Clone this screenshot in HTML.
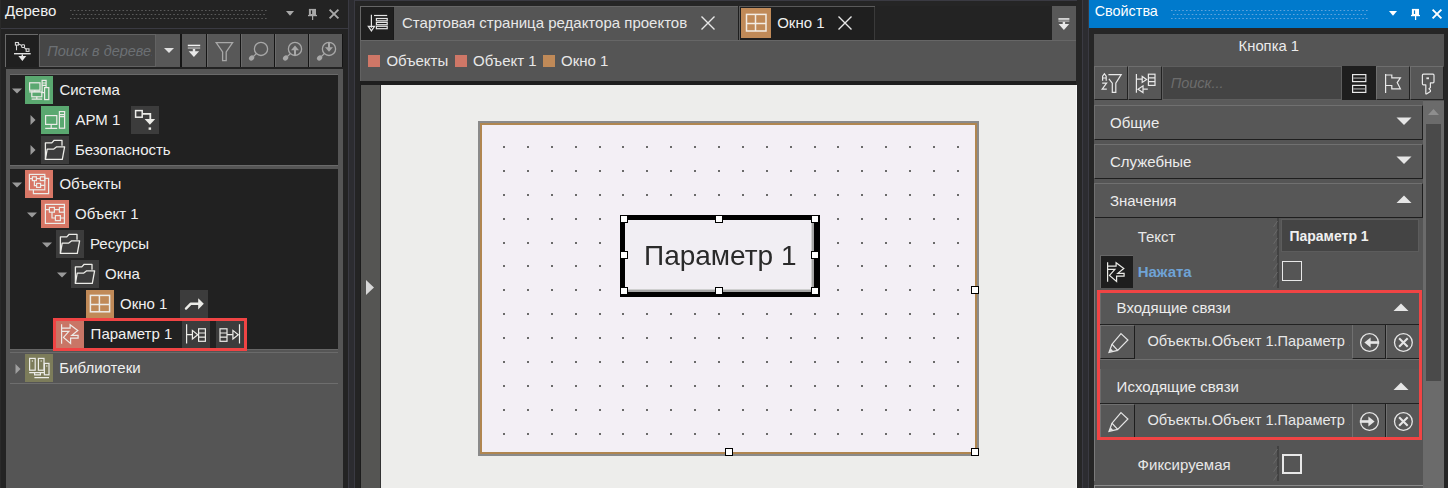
<!DOCTYPE html>
<html><head><meta charset="utf-8"><style>
html,body{margin:0;padding:0;}
body{width:1448px;height:488px;overflow:hidden;position:relative;background:#262626;font-family:"Liberation Sans",sans-serif;}
.a{position:absolute;}
.t{white-space:nowrap;}
svg.a{overflow:visible;}
</style></head><body>
<div class="a" style="left:0px;top:0px;width:1448px;height:488px;background:#262626;"></div>
<div class="a" style="left:0px;top:0px;width:348px;height:488px;background:#232323;"></div>
<div class="a" style="left:0px;top:28px;width:348px;height:1px;background:#3a3a42;"></div>
<div class="a" style="left:348px;top:0px;width:1px;height:488px;background:#3a3a42;"></div>
<div class="a" style="left:349px;top:0px;width:5px;height:488px;background:#2c2c30;"></div>
<div class="a" style="left:354px;top:0px;width:1px;height:488px;background:#3a3a42;"></div>
<div class="a" style="left:355px;top:0px;width:5px;height:488px;background:#242424;"></div>
<div class="a t" style="left:5px;top:3.30px;font-size:15px;line-height:15px;color:#f2f2f2;font-weight:normal;font-style:normal;">Дерево</div>
<svg class="a" style="left:70px;top:8px;" width="196" height="14" viewBox="0 0 196 14"><rect x="0.00" y="2" width="1.6" height="1" fill="#5a5a5a"/><rect x="3.75" y="2" width="1.6" height="1" fill="#5a5a5a"/><rect x="7.50" y="2" width="1.6" height="1" fill="#5a5a5a"/><rect x="11.25" y="2" width="1.6" height="1" fill="#5a5a5a"/><rect x="15.00" y="2" width="1.6" height="1" fill="#5a5a5a"/><rect x="18.75" y="2" width="1.6" height="1" fill="#5a5a5a"/><rect x="22.50" y="2" width="1.6" height="1" fill="#5a5a5a"/><rect x="26.25" y="2" width="1.6" height="1" fill="#5a5a5a"/><rect x="30.00" y="2" width="1.6" height="1" fill="#5a5a5a"/><rect x="33.75" y="2" width="1.6" height="1" fill="#5a5a5a"/><rect x="37.50" y="2" width="1.6" height="1" fill="#5a5a5a"/><rect x="41.25" y="2" width="1.6" height="1" fill="#5a5a5a"/><rect x="45.00" y="2" width="1.6" height="1" fill="#5a5a5a"/><rect x="48.75" y="2" width="1.6" height="1" fill="#5a5a5a"/><rect x="52.50" y="2" width="1.6" height="1" fill="#5a5a5a"/><rect x="56.25" y="2" width="1.6" height="1" fill="#5a5a5a"/><rect x="60.00" y="2" width="1.6" height="1" fill="#5a5a5a"/><rect x="63.75" y="2" width="1.6" height="1" fill="#5a5a5a"/><rect x="67.50" y="2" width="1.6" height="1" fill="#5a5a5a"/><rect x="71.25" y="2" width="1.6" height="1" fill="#5a5a5a"/><rect x="75.00" y="2" width="1.6" height="1" fill="#5a5a5a"/><rect x="78.75" y="2" width="1.6" height="1" fill="#5a5a5a"/><rect x="82.50" y="2" width="1.6" height="1" fill="#5a5a5a"/><rect x="86.25" y="2" width="1.6" height="1" fill="#5a5a5a"/><rect x="90.00" y="2" width="1.6" height="1" fill="#5a5a5a"/><rect x="93.75" y="2" width="1.6" height="1" fill="#5a5a5a"/><rect x="97.50" y="2" width="1.6" height="1" fill="#5a5a5a"/><rect x="101.25" y="2" width="1.6" height="1" fill="#5a5a5a"/><rect x="105.00" y="2" width="1.6" height="1" fill="#5a5a5a"/><rect x="108.75" y="2" width="1.6" height="1" fill="#5a5a5a"/><rect x="112.50" y="2" width="1.6" height="1" fill="#5a5a5a"/><rect x="116.25" y="2" width="1.6" height="1" fill="#5a5a5a"/><rect x="120.00" y="2" width="1.6" height="1" fill="#5a5a5a"/><rect x="123.75" y="2" width="1.6" height="1" fill="#5a5a5a"/><rect x="127.50" y="2" width="1.6" height="1" fill="#5a5a5a"/><rect x="131.25" y="2" width="1.6" height="1" fill="#5a5a5a"/><rect x="135.00" y="2" width="1.6" height="1" fill="#5a5a5a"/><rect x="138.75" y="2" width="1.6" height="1" fill="#5a5a5a"/><rect x="142.50" y="2" width="1.6" height="1" fill="#5a5a5a"/><rect x="146.25" y="2" width="1.6" height="1" fill="#5a5a5a"/><rect x="150.00" y="2" width="1.6" height="1" fill="#5a5a5a"/><rect x="153.75" y="2" width="1.6" height="1" fill="#5a5a5a"/><rect x="157.50" y="2" width="1.6" height="1" fill="#5a5a5a"/><rect x="161.25" y="2" width="1.6" height="1" fill="#5a5a5a"/><rect x="165.00" y="2" width="1.6" height="1" fill="#5a5a5a"/><rect x="168.75" y="2" width="1.6" height="1" fill="#5a5a5a"/><rect x="172.50" y="2" width="1.6" height="1" fill="#5a5a5a"/><rect x="176.25" y="2" width="1.6" height="1" fill="#5a5a5a"/><rect x="180.00" y="2" width="1.6" height="1" fill="#5a5a5a"/><rect x="183.75" y="2" width="1.6" height="1" fill="#5a5a5a"/><rect x="187.50" y="2" width="1.6" height="1" fill="#5a5a5a"/><rect x="191.25" y="2" width="1.6" height="1" fill="#5a5a5a"/><rect x="195.00" y="2" width="1.6" height="1" fill="#5a5a5a"/><rect x="2.00" y="6" width="1.6" height="1" fill="#5a5a5a"/><rect x="5.75" y="6" width="1.6" height="1" fill="#5a5a5a"/><rect x="9.50" y="6" width="1.6" height="1" fill="#5a5a5a"/><rect x="13.25" y="6" width="1.6" height="1" fill="#5a5a5a"/><rect x="17.00" y="6" width="1.6" height="1" fill="#5a5a5a"/><rect x="20.75" y="6" width="1.6" height="1" fill="#5a5a5a"/><rect x="24.50" y="6" width="1.6" height="1" fill="#5a5a5a"/><rect x="28.25" y="6" width="1.6" height="1" fill="#5a5a5a"/><rect x="32.00" y="6" width="1.6" height="1" fill="#5a5a5a"/><rect x="35.75" y="6" width="1.6" height="1" fill="#5a5a5a"/><rect x="39.50" y="6" width="1.6" height="1" fill="#5a5a5a"/><rect x="43.25" y="6" width="1.6" height="1" fill="#5a5a5a"/><rect x="47.00" y="6" width="1.6" height="1" fill="#5a5a5a"/><rect x="50.75" y="6" width="1.6" height="1" fill="#5a5a5a"/><rect x="54.50" y="6" width="1.6" height="1" fill="#5a5a5a"/><rect x="58.25" y="6" width="1.6" height="1" fill="#5a5a5a"/><rect x="62.00" y="6" width="1.6" height="1" fill="#5a5a5a"/><rect x="65.75" y="6" width="1.6" height="1" fill="#5a5a5a"/><rect x="69.50" y="6" width="1.6" height="1" fill="#5a5a5a"/><rect x="73.25" y="6" width="1.6" height="1" fill="#5a5a5a"/><rect x="77.00" y="6" width="1.6" height="1" fill="#5a5a5a"/><rect x="80.75" y="6" width="1.6" height="1" fill="#5a5a5a"/><rect x="84.50" y="6" width="1.6" height="1" fill="#5a5a5a"/><rect x="88.25" y="6" width="1.6" height="1" fill="#5a5a5a"/><rect x="92.00" y="6" width="1.6" height="1" fill="#5a5a5a"/><rect x="95.75" y="6" width="1.6" height="1" fill="#5a5a5a"/><rect x="99.50" y="6" width="1.6" height="1" fill="#5a5a5a"/><rect x="103.25" y="6" width="1.6" height="1" fill="#5a5a5a"/><rect x="107.00" y="6" width="1.6" height="1" fill="#5a5a5a"/><rect x="110.75" y="6" width="1.6" height="1" fill="#5a5a5a"/><rect x="114.50" y="6" width="1.6" height="1" fill="#5a5a5a"/><rect x="118.25" y="6" width="1.6" height="1" fill="#5a5a5a"/><rect x="122.00" y="6" width="1.6" height="1" fill="#5a5a5a"/><rect x="125.75" y="6" width="1.6" height="1" fill="#5a5a5a"/><rect x="129.50" y="6" width="1.6" height="1" fill="#5a5a5a"/><rect x="133.25" y="6" width="1.6" height="1" fill="#5a5a5a"/><rect x="137.00" y="6" width="1.6" height="1" fill="#5a5a5a"/><rect x="140.75" y="6" width="1.6" height="1" fill="#5a5a5a"/><rect x="144.50" y="6" width="1.6" height="1" fill="#5a5a5a"/><rect x="148.25" y="6" width="1.6" height="1" fill="#5a5a5a"/><rect x="152.00" y="6" width="1.6" height="1" fill="#5a5a5a"/><rect x="155.75" y="6" width="1.6" height="1" fill="#5a5a5a"/><rect x="159.50" y="6" width="1.6" height="1" fill="#5a5a5a"/><rect x="163.25" y="6" width="1.6" height="1" fill="#5a5a5a"/><rect x="167.00" y="6" width="1.6" height="1" fill="#5a5a5a"/><rect x="170.75" y="6" width="1.6" height="1" fill="#5a5a5a"/><rect x="174.50" y="6" width="1.6" height="1" fill="#5a5a5a"/><rect x="178.25" y="6" width="1.6" height="1" fill="#5a5a5a"/><rect x="182.00" y="6" width="1.6" height="1" fill="#5a5a5a"/><rect x="185.75" y="6" width="1.6" height="1" fill="#5a5a5a"/><rect x="189.50" y="6" width="1.6" height="1" fill="#5a5a5a"/><rect x="193.25" y="6" width="1.6" height="1" fill="#5a5a5a"/><rect x="0.00" y="10" width="1.6" height="1" fill="#5a5a5a"/><rect x="3.75" y="10" width="1.6" height="1" fill="#5a5a5a"/><rect x="7.50" y="10" width="1.6" height="1" fill="#5a5a5a"/><rect x="11.25" y="10" width="1.6" height="1" fill="#5a5a5a"/><rect x="15.00" y="10" width="1.6" height="1" fill="#5a5a5a"/><rect x="18.75" y="10" width="1.6" height="1" fill="#5a5a5a"/><rect x="22.50" y="10" width="1.6" height="1" fill="#5a5a5a"/><rect x="26.25" y="10" width="1.6" height="1" fill="#5a5a5a"/><rect x="30.00" y="10" width="1.6" height="1" fill="#5a5a5a"/><rect x="33.75" y="10" width="1.6" height="1" fill="#5a5a5a"/><rect x="37.50" y="10" width="1.6" height="1" fill="#5a5a5a"/><rect x="41.25" y="10" width="1.6" height="1" fill="#5a5a5a"/><rect x="45.00" y="10" width="1.6" height="1" fill="#5a5a5a"/><rect x="48.75" y="10" width="1.6" height="1" fill="#5a5a5a"/><rect x="52.50" y="10" width="1.6" height="1" fill="#5a5a5a"/><rect x="56.25" y="10" width="1.6" height="1" fill="#5a5a5a"/><rect x="60.00" y="10" width="1.6" height="1" fill="#5a5a5a"/><rect x="63.75" y="10" width="1.6" height="1" fill="#5a5a5a"/><rect x="67.50" y="10" width="1.6" height="1" fill="#5a5a5a"/><rect x="71.25" y="10" width="1.6" height="1" fill="#5a5a5a"/><rect x="75.00" y="10" width="1.6" height="1" fill="#5a5a5a"/><rect x="78.75" y="10" width="1.6" height="1" fill="#5a5a5a"/><rect x="82.50" y="10" width="1.6" height="1" fill="#5a5a5a"/><rect x="86.25" y="10" width="1.6" height="1" fill="#5a5a5a"/><rect x="90.00" y="10" width="1.6" height="1" fill="#5a5a5a"/><rect x="93.75" y="10" width="1.6" height="1" fill="#5a5a5a"/><rect x="97.50" y="10" width="1.6" height="1" fill="#5a5a5a"/><rect x="101.25" y="10" width="1.6" height="1" fill="#5a5a5a"/><rect x="105.00" y="10" width="1.6" height="1" fill="#5a5a5a"/><rect x="108.75" y="10" width="1.6" height="1" fill="#5a5a5a"/><rect x="112.50" y="10" width="1.6" height="1" fill="#5a5a5a"/><rect x="116.25" y="10" width="1.6" height="1" fill="#5a5a5a"/><rect x="120.00" y="10" width="1.6" height="1" fill="#5a5a5a"/><rect x="123.75" y="10" width="1.6" height="1" fill="#5a5a5a"/><rect x="127.50" y="10" width="1.6" height="1" fill="#5a5a5a"/><rect x="131.25" y="10" width="1.6" height="1" fill="#5a5a5a"/><rect x="135.00" y="10" width="1.6" height="1" fill="#5a5a5a"/><rect x="138.75" y="10" width="1.6" height="1" fill="#5a5a5a"/><rect x="142.50" y="10" width="1.6" height="1" fill="#5a5a5a"/><rect x="146.25" y="10" width="1.6" height="1" fill="#5a5a5a"/><rect x="150.00" y="10" width="1.6" height="1" fill="#5a5a5a"/><rect x="153.75" y="10" width="1.6" height="1" fill="#5a5a5a"/><rect x="157.50" y="10" width="1.6" height="1" fill="#5a5a5a"/><rect x="161.25" y="10" width="1.6" height="1" fill="#5a5a5a"/><rect x="165.00" y="10" width="1.6" height="1" fill="#5a5a5a"/><rect x="168.75" y="10" width="1.6" height="1" fill="#5a5a5a"/><rect x="172.50" y="10" width="1.6" height="1" fill="#5a5a5a"/><rect x="176.25" y="10" width="1.6" height="1" fill="#5a5a5a"/><rect x="180.00" y="10" width="1.6" height="1" fill="#5a5a5a"/><rect x="183.75" y="10" width="1.6" height="1" fill="#5a5a5a"/><rect x="187.50" y="10" width="1.6" height="1" fill="#5a5a5a"/><rect x="191.25" y="10" width="1.6" height="1" fill="#5a5a5a"/><rect x="195.00" y="10" width="1.6" height="1" fill="#5a5a5a"/></svg>
<svg class="a" style="left:286px;top:10px;" width="8" height="6" viewBox="0 0 8 6"><path d="M0 1 L8 1 L4 5.8 Z" fill="#a8a8a8"/></svg>
<svg class="a" style="left:307px;top:8px;" width="12" height="14" viewBox="0 0 12 14"><rect x="1.9" y="0.9" width="7.1" height="6.3" fill="#a8a8a8"/><rect x="3.9" y="2.4" width="1.2" height="3.6" fill="#232323"/><rect x="1" y="6.9" width="9" height="1.3" fill="#a8a8a8"/><rect x="5" y="8" width="1.2" height="4" fill="#a8a8a8"/></svg>
<svg class="a" style="left:329px;top:9px;" width="10" height="10" viewBox="0 0 10 10"><path d="M0.6 0.6L9.4 9.4M9.4 0.6L0.6 9.4" stroke="#a8a8a8" stroke-width="1.9"/></svg>
<div class="a" style="left:5px;top:34px;width:33px;height:33px;background:#1f1f1f;border-top:1px solid #6a6a6a;border-left:1px solid #6a6a6a;box-sizing:border-box;"></div>
<div class="a" style="left:39px;top:34px;width:117px;height:33px;background:#464646;border:1px solid #626262;box-sizing:border-box;"></div>
<div class="a t" style="left:47.3px;top:43.63px;font-size:14.5px;line-height:14.5px;color:#6c7074;font-weight:normal;font-style:italic;width:105px;overflow:hidden;white-space:nowrap;">Поиск в дереве...</div>
<div class="a" style="left:156px;top:34px;width:24px;height:33px;background:#585858;"></div>
<svg class="a" style="left:156px;top:34px;" width="24" height="33" viewBox="0 0 24 33"><path d="M8 14 L18 14 L13 19 Z" fill="#e0e0e0"/></svg>
<div class="a" style="left:180px;top:34px;width:2px;height:33px;background:#151515;"></div>
<div class="a" style="left:182px;top:34px;width:24px;height:33px;background:#585858;"></div>
<div class="a" style="left:206px;top:34px;width:1px;height:33px;background:#151515;"></div>
<div class="a" style="left:207px;top:34px;width:33px;height:33px;background:#585858;border-left:1px solid #6a6a6a;box-sizing:border-box;"></div>
<div class="a" style="left:240px;top:34px;width:1px;height:33px;background:#151515;"></div>
<div class="a" style="left:241px;top:34px;width:33px;height:33px;background:#585858;border-left:1px solid #6a6a6a;box-sizing:border-box;"></div>
<div class="a" style="left:274px;top:34px;width:1px;height:33px;background:#151515;"></div>
<div class="a" style="left:275px;top:34px;width:33px;height:33px;background:#585858;border-left:1px solid #6a6a6a;box-sizing:border-box;"></div>
<div class="a" style="left:308px;top:34px;width:1px;height:33px;background:#151515;"></div>
<div class="a" style="left:309px;top:34px;width:33px;height:33px;background:#585858;border-left:1px solid #6a6a6a;box-sizing:border-box;"></div>
<div class="a" style="left:342px;top:34px;width:1px;height:33px;background:#151515;"></div>
<svg class="a" style="left:5px;top:34px;" width="33" height="33" viewBox="0 0 33 33"><g fill="none" stroke="#d8d8d8" stroke-width="1.1"><rect x="10.4" y="8.5" width="3" height="2.6"/><rect x="16.7" y="10.7" width="2.8" height="2.8" rx="0.8"/><rect x="21.2" y="14.8" width="2.8" height="2.6"/><path d="M11.5 11.1v5.2M13.4 9.8l3.3 1.6M19 13.4l2.2 1.8"/></g><rect x="9" y="19" width="16.7" height="1.4" fill="#e0e0e0"/><rect x="16.6" y="20.4" width="1.4" height="2" fill="#e8e8e8"/><path d="M13.4 22.1h7.9l-3.95 4.9z" fill="#e8e8e8"/></svg>
<svg class="a" style="left:182px;top:34px;" width="24" height="33" viewBox="0 0 24 33"><rect x="5.8" y="10.7" width="12.4" height="1.5" fill="#f0f0f0"/><rect x="5.8" y="13.2" width="12.4" height="1.7" fill="#a0a0a0"/><rect x="10.8" y="14.9" width="2.4" height="3" fill="#e8e8e8"/><path d="M6.7 17.3h10.4l-5.2 5.7z" fill="#e8e8e8"/></svg>
<svg class="a" style="left:207px;top:34px;" width="33" height="33" viewBox="0 0 33 33"><path d="M9.2 8.6h16.4l-6.4 9.4v8.7h-3.6v-8.7z" fill="none" stroke="#a8a8a8" stroke-width="1.3" stroke-linejoin="miter"/></svg>
<svg class="a" style="left:241px;top:34px;" width="33" height="33" viewBox="0 0 33 33"><circle cx="20" cy="14.9" r="6.6" fill="none" stroke="#a8a8a8" stroke-width="1.3"/><path d="M15.3 19.6L12.5 22.4" stroke="#a8a8a8" stroke-width="1.3"/><ellipse cx="10.6" cy="24" rx="2.9" ry="2.3" transform="rotate(-45 10.6 24)" fill="#a8a8a8"/></svg>
<svg class="a" style="left:275px;top:34px;" width="33" height="33" viewBox="0 0 33 33"><circle cx="20" cy="14.9" r="6.6" fill="none" stroke="#a8a8a8" stroke-width="1.3"/><path d="M15.3 19.6L12.5 22.4" stroke="#a8a8a8" stroke-width="1.3"/><ellipse cx="10.6" cy="24" rx="2.9" ry="2.3" transform="rotate(-45 10.6 24)" fill="#a8a8a8"/><path d="M16 16.2h8l-4-4.6z" fill="#a8a8a8"/><rect x="19" y="15.5" width="2" height="5.8" fill="#a8a8a8"/></svg>
<svg class="a" style="left:309px;top:34px;" width="33" height="33" viewBox="0 0 33 33"><circle cx="20" cy="14.9" r="6.6" fill="none" stroke="#a8a8a8" stroke-width="1.3"/><path d="M15.3 19.6L12.5 22.4" stroke="#a8a8a8" stroke-width="1.3"/><ellipse cx="10.6" cy="24" rx="2.9" ry="2.3" transform="rotate(-45 10.6 24)" fill="#a8a8a8"/><path d="M16 13.2h8l-4 4.6z" fill="#a8a8a8"/><rect x="19" y="8.3" width="2" height="5.5" fill="#a8a8a8"/></svg>
<div class="a" style="left:6px;top:69px;width:337px;height:419px;background:#555555;"></div>
<div class="a" style="left:10px;top:74px;width:328px;height:1px;background:#6a6a6a;"></div>
<div class="a" style="left:10px;top:75px;width:328px;height:90px;background:#212121;"></div>
<div class="a" style="left:10px;top:165px;width:328px;height:1px;background:#6a6a6a;"></div>
<div class="a" style="left:10px;top:169px;width:328px;height:180px;background:#212121;"></div>
<div class="a" style="left:10px;top:349px;width:328px;height:1px;background:#666666;"></div>
<div class="a" style="left:10px;top:352px;width:328px;height:1px;background:#6a6a6a;"></div>
<div class="a" style="left:10px;top:383px;width:328px;height:1px;background:#6e6e6e;"></div>
<div class="a" style="left:0px;top:0px;width:1px;height:488px;background:#2a2a2a;"></div>
<div class="a" style="left:355px;top:0px;width:733px;height:6px;background:#252525;"></div>
<div class="a" style="left:355px;top:0px;width:733px;height:1px;background:#3a3a42;"></div>
<div class="a" style="left:360px;top:6px;width:716px;height:34px;background:#232323;"></div>
<div class="a" style="left:360px;top:6px;width:34px;height:34px;background:#1f1f1f;"></div>
<div class="a" style="left:394px;top:6px;width:344px;height:34px;background:#555555;"></div>
<div class="a" style="left:393px;top:6px;width:1px;height:34px;background:#1a1a1a;"></div>
<div class="a" style="left:394px;top:6px;width:344px;height:1px;background:#666666;"></div>
<div class="a" style="left:738px;top:6px;width:2px;height:34px;background:#1f1f1f;"></div>
<div class="a" style="left:740px;top:6px;width:135px;height:34px;background:#1f1f1f;border-top:1px solid #5a5a5a;box-sizing:border-box;"></div>
<div class="a" style="left:874px;top:7px;width:1px;height:33px;background:#3a3a3a;"></div>
<div class="a" style="left:1052px;top:6px;width:24px;height:34px;background:#585858;"></div>
<div class="a" style="left:360px;top:6px;width:1px;height:34px;background:#666666;"></div>
<div class="a" style="left:360px;top:6px;width:34px;height:1px;background:#666666;"></div>
<svg class="a" style="left:360px;top:6px;" width="34" height="34" viewBox="0 0 34 34"><g fill="none" stroke="#e4e4e4" stroke-width="1.2"><path d="M11.4 8.8v13"/><path d="M8.3 20.4h6.2l-3.1 4.5z"/><path d="M14 9.5h13.2"/><rect x="16.4" y="12.5" width="10.8" height="2.3"/><rect x="16.4" y="16.4" width="10.8" height="2.3"/><rect x="16.4" y="20.3" width="10.8" height="2.4"/></g></svg>
<div class="a t" style="left:402px;top:15.30px;font-size:15px;line-height:15px;color:#e8e8e8;font-weight:normal;font-style:normal;">Стартовая страница редактора проектов</div>
<svg class="a" style="left:701px;top:16px;" width="14" height="14" viewBox="0 0 14 14"><path d="M0.5 0.5L13.5 13.5M13.5 0.5L0.5 13.5" stroke="#e8e8e8" stroke-width="1.4"/></svg>
<div class="a" style="left:739px;top:6px;width:1px;height:34px;background:#5a5a5a;"></div>
<div class="a" style="left:741px;top:8px;width:30px;height:30px;background:#c08a58;"></div>
<svg class="a" style="left:741px;top:8px;" width="30" height="30" viewBox="0 0 30 30"><g fill="none" stroke="#f2ece4" stroke-width="1.5"><rect x="5.5" y="6.4" width="19.5" height="16.6"/><path d="M14.5 6.4v16.6M5.5 15.5h19.5"/></g></svg>
<svg class="a" style="left:838px;top:16px;" width="14" height="14" viewBox="0 0 14 14"><path d="M0.5 0.5L13.5 13.5M13.5 0.5L0.5 13.5" stroke="#e8e8e8" stroke-width="1.4"/></svg>
<svg class="a" style="left:1052px;top:6px;" width="24" height="34" viewBox="0 0 24 34"><rect x="6.4" y="12.2" width="11" height="1.5" fill="#f0f0f0"/><rect x="6.4" y="14.3" width="11" height="1.6" fill="#a0a0a0"/><rect x="10.7" y="15.9" width="2.4" height="2.5" fill="#e8e8e8"/><path d="M6.6 18h10.6l-5.3 6z" fill="#e8e8e8"/></svg>
<div class="a t" style="left:777.2px;top:15.30px;font-size:15px;line-height:15px;color:#f0f0f0;font-weight:normal;font-style:normal;">Окно 1</div>
<div class="a" style="left:360px;top:40px;width:716px;height:1px;background:#666666;"></div>
<div class="a" style="left:360px;top:41px;width:716px;height:40px;background:#555555;"></div>
<div class="a" style="left:360px;top:41px;width:1px;height:40px;background:#626262;"></div>
<div class="a" style="left:368px;top:55px;width:12px;height:12px;background:#cf7767;"></div>
<div class="a t" style="left:386.4px;top:53.30px;font-size:15px;line-height:15px;color:#e8e8e8;font-weight:normal;font-style:normal;">Объекты</div>
<div class="a" style="left:455px;top:55px;width:12px;height:12px;background:#cf7767;"></div>
<div class="a t" style="left:473px;top:53.30px;font-size:15px;line-height:15px;color:#e8e8e8;font-weight:normal;font-style:normal;">Объект 1</div>
<div class="a" style="left:543px;top:55px;width:12px;height:12px;background:#c08a58;"></div>
<div class="a t" style="left:561px;top:53.30px;font-size:15px;line-height:15px;color:#e8e8e8;font-weight:normal;font-style:normal;">Окно 1</div>
<div class="a" style="left:360px;top:81px;width:716px;height:4px;background:#1e1e1e;"></div>
<div class="a" style="left:360px;top:85px;width:1px;height:403px;background:#1c1c1c;"></div>
<div class="a" style="left:361px;top:85px;width:19px;height:403px;background:#555553;"></div>
<div class="a" style="left:380px;top:85px;width:1px;height:403px;background:#333333;"></div>
<div class="a" style="left:381px;top:85px;width:695px;height:403px;background:#ededeb;"></div>
<svg class="a" style="left:366px;top:280px;" width="8" height="15" viewBox="0 0 8 15"><path d="M0 0 L8 7.5 L0 15 Z" fill="#d8d8d8"/></svg>
<div class="a" style="left:478px;top:121px;width:501px;height:335px;background:#f3eff5;border:2px solid #8a8a8a;box-sizing:border-box;"></div>
<div class="a" style="left:480px;top:123px;width:497px;height:331px;border:2px solid #b08650;box-sizing:border-box;"></div>
<svg class="a" style="left:482px;top:125px;" width="493" height="327" viewBox="0 0 493 327"><rect x="21" y="21" width="2" height="2" fill="#6a6a6a"/><rect x="21" y="45" width="2" height="2" fill="#6a6a6a"/><rect x="21" y="69" width="2" height="2" fill="#6a6a6a"/><rect x="21" y="93" width="2" height="2" fill="#6a6a6a"/><rect x="21" y="117" width="2" height="2" fill="#6a6a6a"/><rect x="21" y="140" width="2" height="2" fill="#6a6a6a"/><rect x="21" y="164" width="2" height="2" fill="#6a6a6a"/><rect x="21" y="188" width="2" height="2" fill="#6a6a6a"/><rect x="21" y="212" width="2" height="2" fill="#6a6a6a"/><rect x="21" y="236" width="2" height="2" fill="#6a6a6a"/><rect x="21" y="260" width="2" height="2" fill="#6a6a6a"/><rect x="21" y="284" width="2" height="2" fill="#6a6a6a"/><rect x="21" y="308" width="2" height="2" fill="#6a6a6a"/><rect x="45" y="21" width="2" height="2" fill="#6a6a6a"/><rect x="45" y="45" width="2" height="2" fill="#6a6a6a"/><rect x="45" y="69" width="2" height="2" fill="#6a6a6a"/><rect x="45" y="93" width="2" height="2" fill="#6a6a6a"/><rect x="45" y="117" width="2" height="2" fill="#6a6a6a"/><rect x="45" y="140" width="2" height="2" fill="#6a6a6a"/><rect x="45" y="164" width="2" height="2" fill="#6a6a6a"/><rect x="45" y="188" width="2" height="2" fill="#6a6a6a"/><rect x="45" y="212" width="2" height="2" fill="#6a6a6a"/><rect x="45" y="236" width="2" height="2" fill="#6a6a6a"/><rect x="45" y="260" width="2" height="2" fill="#6a6a6a"/><rect x="45" y="284" width="2" height="2" fill="#6a6a6a"/><rect x="45" y="308" width="2" height="2" fill="#6a6a6a"/><rect x="69" y="21" width="2" height="2" fill="#6a6a6a"/><rect x="69" y="45" width="2" height="2" fill="#6a6a6a"/><rect x="69" y="69" width="2" height="2" fill="#6a6a6a"/><rect x="69" y="93" width="2" height="2" fill="#6a6a6a"/><rect x="69" y="117" width="2" height="2" fill="#6a6a6a"/><rect x="69" y="140" width="2" height="2" fill="#6a6a6a"/><rect x="69" y="164" width="2" height="2" fill="#6a6a6a"/><rect x="69" y="188" width="2" height="2" fill="#6a6a6a"/><rect x="69" y="212" width="2" height="2" fill="#6a6a6a"/><rect x="69" y="236" width="2" height="2" fill="#6a6a6a"/><rect x="69" y="260" width="2" height="2" fill="#6a6a6a"/><rect x="69" y="284" width="2" height="2" fill="#6a6a6a"/><rect x="69" y="308" width="2" height="2" fill="#6a6a6a"/><rect x="93" y="21" width="2" height="2" fill="#6a6a6a"/><rect x="93" y="45" width="2" height="2" fill="#6a6a6a"/><rect x="93" y="69" width="2" height="2" fill="#6a6a6a"/><rect x="93" y="93" width="2" height="2" fill="#6a6a6a"/><rect x="93" y="117" width="2" height="2" fill="#6a6a6a"/><rect x="93" y="140" width="2" height="2" fill="#6a6a6a"/><rect x="93" y="164" width="2" height="2" fill="#6a6a6a"/><rect x="93" y="188" width="2" height="2" fill="#6a6a6a"/><rect x="93" y="212" width="2" height="2" fill="#6a6a6a"/><rect x="93" y="236" width="2" height="2" fill="#6a6a6a"/><rect x="93" y="260" width="2" height="2" fill="#6a6a6a"/><rect x="93" y="284" width="2" height="2" fill="#6a6a6a"/><rect x="93" y="308" width="2" height="2" fill="#6a6a6a"/><rect x="117" y="21" width="2" height="2" fill="#6a6a6a"/><rect x="117" y="45" width="2" height="2" fill="#6a6a6a"/><rect x="117" y="69" width="2" height="2" fill="#6a6a6a"/><rect x="117" y="93" width="2" height="2" fill="#6a6a6a"/><rect x="117" y="117" width="2" height="2" fill="#6a6a6a"/><rect x="117" y="140" width="2" height="2" fill="#6a6a6a"/><rect x="117" y="164" width="2" height="2" fill="#6a6a6a"/><rect x="117" y="188" width="2" height="2" fill="#6a6a6a"/><rect x="117" y="212" width="2" height="2" fill="#6a6a6a"/><rect x="117" y="236" width="2" height="2" fill="#6a6a6a"/><rect x="117" y="260" width="2" height="2" fill="#6a6a6a"/><rect x="117" y="284" width="2" height="2" fill="#6a6a6a"/><rect x="117" y="308" width="2" height="2" fill="#6a6a6a"/><rect x="140" y="21" width="2" height="2" fill="#6a6a6a"/><rect x="140" y="45" width="2" height="2" fill="#6a6a6a"/><rect x="140" y="69" width="2" height="2" fill="#6a6a6a"/><rect x="140" y="93" width="2" height="2" fill="#6a6a6a"/><rect x="140" y="117" width="2" height="2" fill="#6a6a6a"/><rect x="140" y="140" width="2" height="2" fill="#6a6a6a"/><rect x="140" y="164" width="2" height="2" fill="#6a6a6a"/><rect x="140" y="188" width="2" height="2" fill="#6a6a6a"/><rect x="140" y="212" width="2" height="2" fill="#6a6a6a"/><rect x="140" y="236" width="2" height="2" fill="#6a6a6a"/><rect x="140" y="260" width="2" height="2" fill="#6a6a6a"/><rect x="140" y="284" width="2" height="2" fill="#6a6a6a"/><rect x="140" y="308" width="2" height="2" fill="#6a6a6a"/><rect x="164" y="21" width="2" height="2" fill="#6a6a6a"/><rect x="164" y="45" width="2" height="2" fill="#6a6a6a"/><rect x="164" y="69" width="2" height="2" fill="#6a6a6a"/><rect x="164" y="93" width="2" height="2" fill="#6a6a6a"/><rect x="164" y="117" width="2" height="2" fill="#6a6a6a"/><rect x="164" y="140" width="2" height="2" fill="#6a6a6a"/><rect x="164" y="164" width="2" height="2" fill="#6a6a6a"/><rect x="164" y="188" width="2" height="2" fill="#6a6a6a"/><rect x="164" y="212" width="2" height="2" fill="#6a6a6a"/><rect x="164" y="236" width="2" height="2" fill="#6a6a6a"/><rect x="164" y="260" width="2" height="2" fill="#6a6a6a"/><rect x="164" y="284" width="2" height="2" fill="#6a6a6a"/><rect x="164" y="308" width="2" height="2" fill="#6a6a6a"/><rect x="188" y="21" width="2" height="2" fill="#6a6a6a"/><rect x="188" y="45" width="2" height="2" fill="#6a6a6a"/><rect x="188" y="69" width="2" height="2" fill="#6a6a6a"/><rect x="188" y="93" width="2" height="2" fill="#6a6a6a"/><rect x="188" y="117" width="2" height="2" fill="#6a6a6a"/><rect x="188" y="140" width="2" height="2" fill="#6a6a6a"/><rect x="188" y="164" width="2" height="2" fill="#6a6a6a"/><rect x="188" y="188" width="2" height="2" fill="#6a6a6a"/><rect x="188" y="212" width="2" height="2" fill="#6a6a6a"/><rect x="188" y="236" width="2" height="2" fill="#6a6a6a"/><rect x="188" y="260" width="2" height="2" fill="#6a6a6a"/><rect x="188" y="284" width="2" height="2" fill="#6a6a6a"/><rect x="188" y="308" width="2" height="2" fill="#6a6a6a"/><rect x="212" y="21" width="2" height="2" fill="#6a6a6a"/><rect x="212" y="45" width="2" height="2" fill="#6a6a6a"/><rect x="212" y="69" width="2" height="2" fill="#6a6a6a"/><rect x="212" y="93" width="2" height="2" fill="#6a6a6a"/><rect x="212" y="117" width="2" height="2" fill="#6a6a6a"/><rect x="212" y="140" width="2" height="2" fill="#6a6a6a"/><rect x="212" y="164" width="2" height="2" fill="#6a6a6a"/><rect x="212" y="188" width="2" height="2" fill="#6a6a6a"/><rect x="212" y="212" width="2" height="2" fill="#6a6a6a"/><rect x="212" y="236" width="2" height="2" fill="#6a6a6a"/><rect x="212" y="260" width="2" height="2" fill="#6a6a6a"/><rect x="212" y="284" width="2" height="2" fill="#6a6a6a"/><rect x="212" y="308" width="2" height="2" fill="#6a6a6a"/><rect x="236" y="21" width="2" height="2" fill="#6a6a6a"/><rect x="236" y="45" width="2" height="2" fill="#6a6a6a"/><rect x="236" y="69" width="2" height="2" fill="#6a6a6a"/><rect x="236" y="93" width="2" height="2" fill="#6a6a6a"/><rect x="236" y="117" width="2" height="2" fill="#6a6a6a"/><rect x="236" y="140" width="2" height="2" fill="#6a6a6a"/><rect x="236" y="164" width="2" height="2" fill="#6a6a6a"/><rect x="236" y="188" width="2" height="2" fill="#6a6a6a"/><rect x="236" y="212" width="2" height="2" fill="#6a6a6a"/><rect x="236" y="236" width="2" height="2" fill="#6a6a6a"/><rect x="236" y="260" width="2" height="2" fill="#6a6a6a"/><rect x="236" y="284" width="2" height="2" fill="#6a6a6a"/><rect x="236" y="308" width="2" height="2" fill="#6a6a6a"/><rect x="260" y="21" width="2" height="2" fill="#6a6a6a"/><rect x="260" y="45" width="2" height="2" fill="#6a6a6a"/><rect x="260" y="69" width="2" height="2" fill="#6a6a6a"/><rect x="260" y="93" width="2" height="2" fill="#6a6a6a"/><rect x="260" y="117" width="2" height="2" fill="#6a6a6a"/><rect x="260" y="140" width="2" height="2" fill="#6a6a6a"/><rect x="260" y="164" width="2" height="2" fill="#6a6a6a"/><rect x="260" y="188" width="2" height="2" fill="#6a6a6a"/><rect x="260" y="212" width="2" height="2" fill="#6a6a6a"/><rect x="260" y="236" width="2" height="2" fill="#6a6a6a"/><rect x="260" y="260" width="2" height="2" fill="#6a6a6a"/><rect x="260" y="284" width="2" height="2" fill="#6a6a6a"/><rect x="260" y="308" width="2" height="2" fill="#6a6a6a"/><rect x="284" y="21" width="2" height="2" fill="#6a6a6a"/><rect x="284" y="45" width="2" height="2" fill="#6a6a6a"/><rect x="284" y="69" width="2" height="2" fill="#6a6a6a"/><rect x="284" y="93" width="2" height="2" fill="#6a6a6a"/><rect x="284" y="117" width="2" height="2" fill="#6a6a6a"/><rect x="284" y="140" width="2" height="2" fill="#6a6a6a"/><rect x="284" y="164" width="2" height="2" fill="#6a6a6a"/><rect x="284" y="188" width="2" height="2" fill="#6a6a6a"/><rect x="284" y="212" width="2" height="2" fill="#6a6a6a"/><rect x="284" y="236" width="2" height="2" fill="#6a6a6a"/><rect x="284" y="260" width="2" height="2" fill="#6a6a6a"/><rect x="284" y="284" width="2" height="2" fill="#6a6a6a"/><rect x="284" y="308" width="2" height="2" fill="#6a6a6a"/><rect x="308" y="21" width="2" height="2" fill="#6a6a6a"/><rect x="308" y="45" width="2" height="2" fill="#6a6a6a"/><rect x="308" y="69" width="2" height="2" fill="#6a6a6a"/><rect x="308" y="93" width="2" height="2" fill="#6a6a6a"/><rect x="308" y="117" width="2" height="2" fill="#6a6a6a"/><rect x="308" y="140" width="2" height="2" fill="#6a6a6a"/><rect x="308" y="164" width="2" height="2" fill="#6a6a6a"/><rect x="308" y="188" width="2" height="2" fill="#6a6a6a"/><rect x="308" y="212" width="2" height="2" fill="#6a6a6a"/><rect x="308" y="236" width="2" height="2" fill="#6a6a6a"/><rect x="308" y="260" width="2" height="2" fill="#6a6a6a"/><rect x="308" y="284" width="2" height="2" fill="#6a6a6a"/><rect x="308" y="308" width="2" height="2" fill="#6a6a6a"/><rect x="332" y="21" width="2" height="2" fill="#6a6a6a"/><rect x="332" y="45" width="2" height="2" fill="#6a6a6a"/><rect x="332" y="69" width="2" height="2" fill="#6a6a6a"/><rect x="332" y="93" width="2" height="2" fill="#6a6a6a"/><rect x="332" y="117" width="2" height="2" fill="#6a6a6a"/><rect x="332" y="140" width="2" height="2" fill="#6a6a6a"/><rect x="332" y="164" width="2" height="2" fill="#6a6a6a"/><rect x="332" y="188" width="2" height="2" fill="#6a6a6a"/><rect x="332" y="212" width="2" height="2" fill="#6a6a6a"/><rect x="332" y="236" width="2" height="2" fill="#6a6a6a"/><rect x="332" y="260" width="2" height="2" fill="#6a6a6a"/><rect x="332" y="284" width="2" height="2" fill="#6a6a6a"/><rect x="332" y="308" width="2" height="2" fill="#6a6a6a"/><rect x="355" y="21" width="2" height="2" fill="#6a6a6a"/><rect x="355" y="45" width="2" height="2" fill="#6a6a6a"/><rect x="355" y="69" width="2" height="2" fill="#6a6a6a"/><rect x="355" y="93" width="2" height="2" fill="#6a6a6a"/><rect x="355" y="117" width="2" height="2" fill="#6a6a6a"/><rect x="355" y="140" width="2" height="2" fill="#6a6a6a"/><rect x="355" y="164" width="2" height="2" fill="#6a6a6a"/><rect x="355" y="188" width="2" height="2" fill="#6a6a6a"/><rect x="355" y="212" width="2" height="2" fill="#6a6a6a"/><rect x="355" y="236" width="2" height="2" fill="#6a6a6a"/><rect x="355" y="260" width="2" height="2" fill="#6a6a6a"/><rect x="355" y="284" width="2" height="2" fill="#6a6a6a"/><rect x="355" y="308" width="2" height="2" fill="#6a6a6a"/><rect x="379" y="21" width="2" height="2" fill="#6a6a6a"/><rect x="379" y="45" width="2" height="2" fill="#6a6a6a"/><rect x="379" y="69" width="2" height="2" fill="#6a6a6a"/><rect x="379" y="93" width="2" height="2" fill="#6a6a6a"/><rect x="379" y="117" width="2" height="2" fill="#6a6a6a"/><rect x="379" y="140" width="2" height="2" fill="#6a6a6a"/><rect x="379" y="164" width="2" height="2" fill="#6a6a6a"/><rect x="379" y="188" width="2" height="2" fill="#6a6a6a"/><rect x="379" y="212" width="2" height="2" fill="#6a6a6a"/><rect x="379" y="236" width="2" height="2" fill="#6a6a6a"/><rect x="379" y="260" width="2" height="2" fill="#6a6a6a"/><rect x="379" y="284" width="2" height="2" fill="#6a6a6a"/><rect x="379" y="308" width="2" height="2" fill="#6a6a6a"/><rect x="403" y="21" width="2" height="2" fill="#6a6a6a"/><rect x="403" y="45" width="2" height="2" fill="#6a6a6a"/><rect x="403" y="69" width="2" height="2" fill="#6a6a6a"/><rect x="403" y="93" width="2" height="2" fill="#6a6a6a"/><rect x="403" y="117" width="2" height="2" fill="#6a6a6a"/><rect x="403" y="140" width="2" height="2" fill="#6a6a6a"/><rect x="403" y="164" width="2" height="2" fill="#6a6a6a"/><rect x="403" y="188" width="2" height="2" fill="#6a6a6a"/><rect x="403" y="212" width="2" height="2" fill="#6a6a6a"/><rect x="403" y="236" width="2" height="2" fill="#6a6a6a"/><rect x="403" y="260" width="2" height="2" fill="#6a6a6a"/><rect x="403" y="284" width="2" height="2" fill="#6a6a6a"/><rect x="403" y="308" width="2" height="2" fill="#6a6a6a"/><rect x="427" y="21" width="2" height="2" fill="#6a6a6a"/><rect x="427" y="45" width="2" height="2" fill="#6a6a6a"/><rect x="427" y="69" width="2" height="2" fill="#6a6a6a"/><rect x="427" y="93" width="2" height="2" fill="#6a6a6a"/><rect x="427" y="117" width="2" height="2" fill="#6a6a6a"/><rect x="427" y="140" width="2" height="2" fill="#6a6a6a"/><rect x="427" y="164" width="2" height="2" fill="#6a6a6a"/><rect x="427" y="188" width="2" height="2" fill="#6a6a6a"/><rect x="427" y="212" width="2" height="2" fill="#6a6a6a"/><rect x="427" y="236" width="2" height="2" fill="#6a6a6a"/><rect x="427" y="260" width="2" height="2" fill="#6a6a6a"/><rect x="427" y="284" width="2" height="2" fill="#6a6a6a"/><rect x="427" y="308" width="2" height="2" fill="#6a6a6a"/><rect x="451" y="21" width="2" height="2" fill="#6a6a6a"/><rect x="451" y="45" width="2" height="2" fill="#6a6a6a"/><rect x="451" y="69" width="2" height="2" fill="#6a6a6a"/><rect x="451" y="93" width="2" height="2" fill="#6a6a6a"/><rect x="451" y="117" width="2" height="2" fill="#6a6a6a"/><rect x="451" y="140" width="2" height="2" fill="#6a6a6a"/><rect x="451" y="164" width="2" height="2" fill="#6a6a6a"/><rect x="451" y="188" width="2" height="2" fill="#6a6a6a"/><rect x="451" y="212" width="2" height="2" fill="#6a6a6a"/><rect x="451" y="236" width="2" height="2" fill="#6a6a6a"/><rect x="451" y="260" width="2" height="2" fill="#6a6a6a"/><rect x="451" y="284" width="2" height="2" fill="#6a6a6a"/><rect x="451" y="308" width="2" height="2" fill="#6a6a6a"/><rect x="475" y="21" width="2" height="2" fill="#6a6a6a"/><rect x="475" y="45" width="2" height="2" fill="#6a6a6a"/><rect x="475" y="69" width="2" height="2" fill="#6a6a6a"/><rect x="475" y="93" width="2" height="2" fill="#6a6a6a"/><rect x="475" y="117" width="2" height="2" fill="#6a6a6a"/><rect x="475" y="140" width="2" height="2" fill="#6a6a6a"/><rect x="475" y="164" width="2" height="2" fill="#6a6a6a"/><rect x="475" y="188" width="2" height="2" fill="#6a6a6a"/><rect x="475" y="212" width="2" height="2" fill="#6a6a6a"/><rect x="475" y="236" width="2" height="2" fill="#6a6a6a"/><rect x="475" y="260" width="2" height="2" fill="#6a6a6a"/><rect x="475" y="284" width="2" height="2" fill="#6a6a6a"/><rect x="475" y="308" width="2" height="2" fill="#6a6a6a"/></svg>
<div class="a" style="left:620px;top:215px;width:200px;height:82px;background:#f1eef3;border:5px solid #000;border-right-width:6px;box-sizing:border-box;"></div>
<div class="a" style="left:625px;top:290px;width:189px;height:2px;background:#a4a4a4;"></div>
<div class="a" style="left:812px;top:220px;width:2px;height:72px;background:#a4a4a4;"></div>
<div class="a" style="left:625px;top:289px;width:187px;height:1px;background:#cfcfcf;"></div>
<div class="a" style="left:811px;top:220px;width:1px;height:70px;background:#cfcfcf;"></div>
<div class="a t" style="left:643.8px;top:241.60px;font-size:28px;line-height:28px;color:#2a2a2a;font-weight:normal;font-style:normal;will-change:transform;">Параметр 1</div>
<div class="a" style="left:620px;top:215px;width:8px;height:8px;background:#ffffff;border:1.5px solid #000;box-sizing:border-box;"></div>
<div class="a" style="left:620px;top:251px;width:8px;height:8px;background:#ffffff;border:1.5px solid #000;box-sizing:border-box;"></div>
<div class="a" style="left:620px;top:287px;width:8px;height:8px;background:#ffffff;border:1.5px solid #000;box-sizing:border-box;"></div>
<div class="a" style="left:715px;top:215px;width:8px;height:8px;background:#ffffff;border:1.5px solid #000;box-sizing:border-box;"></div>
<div class="a" style="left:715px;top:287px;width:8px;height:8px;background:#ffffff;border:1.5px solid #000;box-sizing:border-box;"></div>
<div class="a" style="left:811px;top:215px;width:8px;height:8px;background:#ffffff;border:1.5px solid #000;box-sizing:border-box;"></div>
<div class="a" style="left:811px;top:251px;width:8px;height:8px;background:#ffffff;border:1.5px solid #000;box-sizing:border-box;"></div>
<div class="a" style="left:811px;top:287px;width:8px;height:8px;background:#ffffff;border:1.5px solid #000;box-sizing:border-box;"></div>
<div class="a" style="left:971px;top:286px;width:8px;height:8px;background:#ffffff;border:1.5px solid #000;box-sizing:border-box;"></div>
<div class="a" style="left:725px;top:448px;width:8px;height:8px;background:#ffffff;border:1.5px solid #000;box-sizing:border-box;"></div>
<div class="a" style="left:971px;top:448px;width:8px;height:8px;background:#ffffff;border:1.5px solid #000;box-sizing:border-box;"></div>
<div class="a" style="left:1076px;top:85px;width:1px;height:403px;background:#f6f6f6;"></div>
<div class="a" style="left:1077px;top:0px;width:5px;height:488px;background:#262626;"></div>
<div class="a" style="left:1082px;top:0px;width:1px;height:488px;background:#3a3a42;"></div>
<div class="a" style="left:1083px;top:0px;width:5px;height:488px;background:#2c2c30;"></div>
<div class="a" style="left:1088px;top:0px;width:1px;height:488px;background:#3a3a42;"></div>
<div class="a" style="left:1089px;top:0px;width:359px;height:28px;background:#007acc;"></div>
<div class="a t" style="left:1094.7px;top:3.81px;font-size:14.4px;line-height:14.4px;color:#ffffff;font-weight:normal;font-style:normal;">Свойства</div>
<svg class="a" style="left:1171px;top:8px;" width="196" height="14" viewBox="0 0 196 14"><rect x="0.00" y="2" width="1.6" height="1" fill="#5fa3dc"/><rect x="3.75" y="2" width="1.6" height="1" fill="#5fa3dc"/><rect x="7.50" y="2" width="1.6" height="1" fill="#5fa3dc"/><rect x="11.25" y="2" width="1.6" height="1" fill="#5fa3dc"/><rect x="15.00" y="2" width="1.6" height="1" fill="#5fa3dc"/><rect x="18.75" y="2" width="1.6" height="1" fill="#5fa3dc"/><rect x="22.50" y="2" width="1.6" height="1" fill="#5fa3dc"/><rect x="26.25" y="2" width="1.6" height="1" fill="#5fa3dc"/><rect x="30.00" y="2" width="1.6" height="1" fill="#5fa3dc"/><rect x="33.75" y="2" width="1.6" height="1" fill="#5fa3dc"/><rect x="37.50" y="2" width="1.6" height="1" fill="#5fa3dc"/><rect x="41.25" y="2" width="1.6" height="1" fill="#5fa3dc"/><rect x="45.00" y="2" width="1.6" height="1" fill="#5fa3dc"/><rect x="48.75" y="2" width="1.6" height="1" fill="#5fa3dc"/><rect x="52.50" y="2" width="1.6" height="1" fill="#5fa3dc"/><rect x="56.25" y="2" width="1.6" height="1" fill="#5fa3dc"/><rect x="60.00" y="2" width="1.6" height="1" fill="#5fa3dc"/><rect x="63.75" y="2" width="1.6" height="1" fill="#5fa3dc"/><rect x="67.50" y="2" width="1.6" height="1" fill="#5fa3dc"/><rect x="71.25" y="2" width="1.6" height="1" fill="#5fa3dc"/><rect x="75.00" y="2" width="1.6" height="1" fill="#5fa3dc"/><rect x="78.75" y="2" width="1.6" height="1" fill="#5fa3dc"/><rect x="82.50" y="2" width="1.6" height="1" fill="#5fa3dc"/><rect x="86.25" y="2" width="1.6" height="1" fill="#5fa3dc"/><rect x="90.00" y="2" width="1.6" height="1" fill="#5fa3dc"/><rect x="93.75" y="2" width="1.6" height="1" fill="#5fa3dc"/><rect x="97.50" y="2" width="1.6" height="1" fill="#5fa3dc"/><rect x="101.25" y="2" width="1.6" height="1" fill="#5fa3dc"/><rect x="105.00" y="2" width="1.6" height="1" fill="#5fa3dc"/><rect x="108.75" y="2" width="1.6" height="1" fill="#5fa3dc"/><rect x="112.50" y="2" width="1.6" height="1" fill="#5fa3dc"/><rect x="116.25" y="2" width="1.6" height="1" fill="#5fa3dc"/><rect x="120.00" y="2" width="1.6" height="1" fill="#5fa3dc"/><rect x="123.75" y="2" width="1.6" height="1" fill="#5fa3dc"/><rect x="127.50" y="2" width="1.6" height="1" fill="#5fa3dc"/><rect x="131.25" y="2" width="1.6" height="1" fill="#5fa3dc"/><rect x="135.00" y="2" width="1.6" height="1" fill="#5fa3dc"/><rect x="138.75" y="2" width="1.6" height="1" fill="#5fa3dc"/><rect x="142.50" y="2" width="1.6" height="1" fill="#5fa3dc"/><rect x="146.25" y="2" width="1.6" height="1" fill="#5fa3dc"/><rect x="150.00" y="2" width="1.6" height="1" fill="#5fa3dc"/><rect x="153.75" y="2" width="1.6" height="1" fill="#5fa3dc"/><rect x="157.50" y="2" width="1.6" height="1" fill="#5fa3dc"/><rect x="161.25" y="2" width="1.6" height="1" fill="#5fa3dc"/><rect x="165.00" y="2" width="1.6" height="1" fill="#5fa3dc"/><rect x="168.75" y="2" width="1.6" height="1" fill="#5fa3dc"/><rect x="172.50" y="2" width="1.6" height="1" fill="#5fa3dc"/><rect x="176.25" y="2" width="1.6" height="1" fill="#5fa3dc"/><rect x="180.00" y="2" width="1.6" height="1" fill="#5fa3dc"/><rect x="183.75" y="2" width="1.6" height="1" fill="#5fa3dc"/><rect x="187.50" y="2" width="1.6" height="1" fill="#5fa3dc"/><rect x="191.25" y="2" width="1.6" height="1" fill="#5fa3dc"/><rect x="195.00" y="2" width="1.6" height="1" fill="#5fa3dc"/><rect x="2.00" y="6" width="1.6" height="1" fill="#5fa3dc"/><rect x="5.75" y="6" width="1.6" height="1" fill="#5fa3dc"/><rect x="9.50" y="6" width="1.6" height="1" fill="#5fa3dc"/><rect x="13.25" y="6" width="1.6" height="1" fill="#5fa3dc"/><rect x="17.00" y="6" width="1.6" height="1" fill="#5fa3dc"/><rect x="20.75" y="6" width="1.6" height="1" fill="#5fa3dc"/><rect x="24.50" y="6" width="1.6" height="1" fill="#5fa3dc"/><rect x="28.25" y="6" width="1.6" height="1" fill="#5fa3dc"/><rect x="32.00" y="6" width="1.6" height="1" fill="#5fa3dc"/><rect x="35.75" y="6" width="1.6" height="1" fill="#5fa3dc"/><rect x="39.50" y="6" width="1.6" height="1" fill="#5fa3dc"/><rect x="43.25" y="6" width="1.6" height="1" fill="#5fa3dc"/><rect x="47.00" y="6" width="1.6" height="1" fill="#5fa3dc"/><rect x="50.75" y="6" width="1.6" height="1" fill="#5fa3dc"/><rect x="54.50" y="6" width="1.6" height="1" fill="#5fa3dc"/><rect x="58.25" y="6" width="1.6" height="1" fill="#5fa3dc"/><rect x="62.00" y="6" width="1.6" height="1" fill="#5fa3dc"/><rect x="65.75" y="6" width="1.6" height="1" fill="#5fa3dc"/><rect x="69.50" y="6" width="1.6" height="1" fill="#5fa3dc"/><rect x="73.25" y="6" width="1.6" height="1" fill="#5fa3dc"/><rect x="77.00" y="6" width="1.6" height="1" fill="#5fa3dc"/><rect x="80.75" y="6" width="1.6" height="1" fill="#5fa3dc"/><rect x="84.50" y="6" width="1.6" height="1" fill="#5fa3dc"/><rect x="88.25" y="6" width="1.6" height="1" fill="#5fa3dc"/><rect x="92.00" y="6" width="1.6" height="1" fill="#5fa3dc"/><rect x="95.75" y="6" width="1.6" height="1" fill="#5fa3dc"/><rect x="99.50" y="6" width="1.6" height="1" fill="#5fa3dc"/><rect x="103.25" y="6" width="1.6" height="1" fill="#5fa3dc"/><rect x="107.00" y="6" width="1.6" height="1" fill="#5fa3dc"/><rect x="110.75" y="6" width="1.6" height="1" fill="#5fa3dc"/><rect x="114.50" y="6" width="1.6" height="1" fill="#5fa3dc"/><rect x="118.25" y="6" width="1.6" height="1" fill="#5fa3dc"/><rect x="122.00" y="6" width="1.6" height="1" fill="#5fa3dc"/><rect x="125.75" y="6" width="1.6" height="1" fill="#5fa3dc"/><rect x="129.50" y="6" width="1.6" height="1" fill="#5fa3dc"/><rect x="133.25" y="6" width="1.6" height="1" fill="#5fa3dc"/><rect x="137.00" y="6" width="1.6" height="1" fill="#5fa3dc"/><rect x="140.75" y="6" width="1.6" height="1" fill="#5fa3dc"/><rect x="144.50" y="6" width="1.6" height="1" fill="#5fa3dc"/><rect x="148.25" y="6" width="1.6" height="1" fill="#5fa3dc"/><rect x="152.00" y="6" width="1.6" height="1" fill="#5fa3dc"/><rect x="155.75" y="6" width="1.6" height="1" fill="#5fa3dc"/><rect x="159.50" y="6" width="1.6" height="1" fill="#5fa3dc"/><rect x="163.25" y="6" width="1.6" height="1" fill="#5fa3dc"/><rect x="167.00" y="6" width="1.6" height="1" fill="#5fa3dc"/><rect x="170.75" y="6" width="1.6" height="1" fill="#5fa3dc"/><rect x="174.50" y="6" width="1.6" height="1" fill="#5fa3dc"/><rect x="178.25" y="6" width="1.6" height="1" fill="#5fa3dc"/><rect x="182.00" y="6" width="1.6" height="1" fill="#5fa3dc"/><rect x="185.75" y="6" width="1.6" height="1" fill="#5fa3dc"/><rect x="189.50" y="6" width="1.6" height="1" fill="#5fa3dc"/><rect x="193.25" y="6" width="1.6" height="1" fill="#5fa3dc"/><rect x="0.00" y="10" width="1.6" height="1" fill="#5fa3dc"/><rect x="3.75" y="10" width="1.6" height="1" fill="#5fa3dc"/><rect x="7.50" y="10" width="1.6" height="1" fill="#5fa3dc"/><rect x="11.25" y="10" width="1.6" height="1" fill="#5fa3dc"/><rect x="15.00" y="10" width="1.6" height="1" fill="#5fa3dc"/><rect x="18.75" y="10" width="1.6" height="1" fill="#5fa3dc"/><rect x="22.50" y="10" width="1.6" height="1" fill="#5fa3dc"/><rect x="26.25" y="10" width="1.6" height="1" fill="#5fa3dc"/><rect x="30.00" y="10" width="1.6" height="1" fill="#5fa3dc"/><rect x="33.75" y="10" width="1.6" height="1" fill="#5fa3dc"/><rect x="37.50" y="10" width="1.6" height="1" fill="#5fa3dc"/><rect x="41.25" y="10" width="1.6" height="1" fill="#5fa3dc"/><rect x="45.00" y="10" width="1.6" height="1" fill="#5fa3dc"/><rect x="48.75" y="10" width="1.6" height="1" fill="#5fa3dc"/><rect x="52.50" y="10" width="1.6" height="1" fill="#5fa3dc"/><rect x="56.25" y="10" width="1.6" height="1" fill="#5fa3dc"/><rect x="60.00" y="10" width="1.6" height="1" fill="#5fa3dc"/><rect x="63.75" y="10" width="1.6" height="1" fill="#5fa3dc"/><rect x="67.50" y="10" width="1.6" height="1" fill="#5fa3dc"/><rect x="71.25" y="10" width="1.6" height="1" fill="#5fa3dc"/><rect x="75.00" y="10" width="1.6" height="1" fill="#5fa3dc"/><rect x="78.75" y="10" width="1.6" height="1" fill="#5fa3dc"/><rect x="82.50" y="10" width="1.6" height="1" fill="#5fa3dc"/><rect x="86.25" y="10" width="1.6" height="1" fill="#5fa3dc"/><rect x="90.00" y="10" width="1.6" height="1" fill="#5fa3dc"/><rect x="93.75" y="10" width="1.6" height="1" fill="#5fa3dc"/><rect x="97.50" y="10" width="1.6" height="1" fill="#5fa3dc"/><rect x="101.25" y="10" width="1.6" height="1" fill="#5fa3dc"/><rect x="105.00" y="10" width="1.6" height="1" fill="#5fa3dc"/><rect x="108.75" y="10" width="1.6" height="1" fill="#5fa3dc"/><rect x="112.50" y="10" width="1.6" height="1" fill="#5fa3dc"/><rect x="116.25" y="10" width="1.6" height="1" fill="#5fa3dc"/><rect x="120.00" y="10" width="1.6" height="1" fill="#5fa3dc"/><rect x="123.75" y="10" width="1.6" height="1" fill="#5fa3dc"/><rect x="127.50" y="10" width="1.6" height="1" fill="#5fa3dc"/><rect x="131.25" y="10" width="1.6" height="1" fill="#5fa3dc"/><rect x="135.00" y="10" width="1.6" height="1" fill="#5fa3dc"/><rect x="138.75" y="10" width="1.6" height="1" fill="#5fa3dc"/><rect x="142.50" y="10" width="1.6" height="1" fill="#5fa3dc"/><rect x="146.25" y="10" width="1.6" height="1" fill="#5fa3dc"/><rect x="150.00" y="10" width="1.6" height="1" fill="#5fa3dc"/><rect x="153.75" y="10" width="1.6" height="1" fill="#5fa3dc"/><rect x="157.50" y="10" width="1.6" height="1" fill="#5fa3dc"/><rect x="161.25" y="10" width="1.6" height="1" fill="#5fa3dc"/><rect x="165.00" y="10" width="1.6" height="1" fill="#5fa3dc"/><rect x="168.75" y="10" width="1.6" height="1" fill="#5fa3dc"/><rect x="172.50" y="10" width="1.6" height="1" fill="#5fa3dc"/><rect x="176.25" y="10" width="1.6" height="1" fill="#5fa3dc"/><rect x="180.00" y="10" width="1.6" height="1" fill="#5fa3dc"/><rect x="183.75" y="10" width="1.6" height="1" fill="#5fa3dc"/><rect x="187.50" y="10" width="1.6" height="1" fill="#5fa3dc"/><rect x="191.25" y="10" width="1.6" height="1" fill="#5fa3dc"/><rect x="195.00" y="10" width="1.6" height="1" fill="#5fa3dc"/></svg>
<svg class="a" style="left:1389px;top:10px;" width="8" height="6" viewBox="0 0 8 6"><path d="M0 1 L8 1 L4 5.8 Z" fill="#ffffff"/></svg>
<svg class="a" style="left:1410px;top:8px;" width="12" height="14" viewBox="0 0 12 14"><rect x="1.9" y="0.9" width="7.1" height="6.3" fill="#ffffff"/><rect x="3.9" y="2.4" width="1.2" height="3.6" fill="#007acc"/><rect x="1" y="6.9" width="9" height="1.3" fill="#ffffff"/><rect x="5" y="8" width="1.2" height="4" fill="#ffffff"/></svg>
<svg class="a" style="left:1432px;top:9px;" width="10" height="10" viewBox="0 0 10 10"><path d="M0.6 0.6L9.4 9.4M9.4 0.6L0.6 9.4" stroke="#ffffff" stroke-width="1.9"/></svg>
<div class="a" style="left:1089px;top:28px;width:359px;height:460px;background:#262626;"></div>
<div class="a" style="left:1094px;top:34px;width:350px;height:454px;background:#555555;"></div>
<div class="a t" style="left:1238.6px;top:39.27px;font-size:14.8px;line-height:14.8px;color:#ececec;font-weight:normal;font-style:normal;">Кнопка 1</div>
<div class="a" style="left:1094px;top:66px;width:34px;height:34px;background:#575757;border-top:1px solid #6e6e6e;border-left:1px solid #6e6e6e;border-right:1px solid #222;border-bottom:1px solid #222;box-sizing:border-box;"></div>
<div class="a" style="left:1128px;top:66px;width:34px;height:34px;background:#575757;border-top:1px solid #6e6e6e;border-left:1px solid #6e6e6e;border-right:1px solid #222;border-bottom:1px solid #222;box-sizing:border-box;"></div>
<div class="a" style="left:1162px;top:66px;width:180px;height:34px;background:#444444;border:1px solid #5e5e5e;box-sizing:border-box;"></div>
<div class="a t" style="left:1170.7px;top:75.73px;font-size:14.5px;line-height:14.5px;color:#6c6c6c;font-weight:normal;font-style:italic;">Поиск...</div>
<div class="a" style="left:1342px;top:66px;width:34px;height:34px;background:#1e1e1e;"></div>
<div class="a" style="left:1376px;top:66px;width:34px;height:34px;background:#575757;border-top:1px solid #6e6e6e;border-left:1px solid #6e6e6e;border-right:1px solid #222;border-bottom:1px solid #222;box-sizing:border-box;"></div>
<div class="a" style="left:1410px;top:66px;width:34px;height:34px;background:#575757;border-top:1px solid #6e6e6e;border-left:1px solid #6e6e6e;border-right:1px solid #222;border-bottom:1px solid #222;box-sizing:border-box;"></div>
<svg class="a" style="left:1094px;top:66px;" width="34" height="34" viewBox="0 0 34 34"><g fill="none" stroke="#e8e8e8" stroke-width="1.2"><path d="M8.6 14.8V10.2l1.8-2.4 1.8 2.4v4.6M8.6 12h3.6"/><path d="M8.2 17.2h4.4l-4.4 6h4.6"/><path d="M14.4 8.6h12.8l-5.4 8.6v9.2h-3.5v-9.2l-3.4-4.4"/></g></svg>
<svg class="a" style="left:1128px;top:66px;" width="34" height="34" viewBox="0 0 34 34"><g fill="none" stroke="#e8e8e8" stroke-width="1.2"><path d="M8.4 8v18.8M8.4 13.2h5.8"/><path d="M14.2 10.4v6l4.4-3z"/><rect x="20.4" y="8.2" width="6.6" height="11.2"/><path d="M20.4 11.9h6.6M20.4 15.6h6.6"/><path d="M15 19.8v6.8l-5-3.4zM15 23.2h4.8"/></g></svg>
<svg class="a" style="left:1342px;top:66px;" width="34" height="34" viewBox="0 0 34 34"><g fill="none" stroke="#e8e8e8" stroke-width="1.2"><rect x="10.6" y="8.6" width="13.2" height="7"/><rect x="10.6" y="19.4" width="13.2" height="7"/></g><rect x="11.2" y="11.4" width="12" height="1.4" fill="#909090"/><rect x="11.2" y="22.2" width="12" height="1.4" fill="#909090"/></svg>
<svg class="a" style="left:1376px;top:66px;" width="34" height="34" viewBox="0 0 34 34"><g fill="none" stroke="#e8e8e8" stroke-width="1.2" stroke-linejoin="miter"><path d="M9.6 8v19"/><path d="M9.6 9h6.2v2.8h8.6l-3.2 4.8 3.2 6.2h-8.6v-3.3H9.6"/></g></svg>
<svg class="a" style="left:1410px;top:66px;" width="34" height="34" viewBox="0 0 34 34"><g fill="none" stroke="#e8e8e8" stroke-width="1.2" stroke-linejoin="round"><path d="M12.4 9.2q0-1 1-1h9.6q1 0 1 1v6.6q0 1-1 1h-2.6v4.8l-1.4 1.2 1.4 1.4v1.2l-3.6 2.4h-1v-9h-2.4q-1 0-1-1z"/></g><rect x="16.4" y="11.4" width="2.6" height="1.8" fill="#e8e8e8"/></svg>
<div class="a" style="left:1094px;top:100px;width:329px;height:5px;background:#5a5a5a;"></div>
<div class="a" style="left:1423px;top:101px;width:21px;height:387px;background:#6b6b6b;"></div>
<svg class="a" style="left:1423px;top:101px;" width="21" height="20" viewBox="0 0 21 20"><path d="M5 14 L16 14 L10.5 8 Z" fill="#8e8e8e"/></svg>
<div class="a" style="left:1426px;top:124px;width:15px;height:257px;background:#4a4a4a;"></div>
<div class="a" style="left:1094px;top:105px;width:329px;height:35px;background:#575757;border-top:1px solid #707070;border-left:1px solid #707070;border-bottom:1px solid #1e1e1e;border-right:1px solid #1e1e1e;box-sizing:border-box;"></div>
<div class="a t" style="left:1110px;top:115.30px;font-size:15px;line-height:15px;color:#ececec;font-weight:normal;font-style:normal;">Общие</div>
<svg class="a" style="left:1396px;top:117px;" width="16" height="9" viewBox="0 0 16 9"><path d="M0.5 0.5 L15.5 0.5 L8 8 Z" fill="#e6e6e6"/></svg>
<div class="a" style="left:1094px;top:144px;width:329px;height:35px;background:#575757;border-top:1px solid #707070;border-left:1px solid #707070;border-bottom:1px solid #1e1e1e;border-right:1px solid #1e1e1e;box-sizing:border-box;"></div>
<div class="a t" style="left:1110px;top:154.30px;font-size:15px;line-height:15px;color:#ececec;font-weight:normal;font-style:normal;">Служебные</div>
<svg class="a" style="left:1396px;top:156px;" width="16" height="9" viewBox="0 0 16 9"><path d="M0.5 0.5 L15.5 0.5 L8 8 Z" fill="#e6e6e6"/></svg>
<div class="a" style="left:1094px;top:183px;width:329px;height:35px;background:#575757;border-top:1px solid #707070;border-left:1px solid #707070;border-bottom:1px solid #1e1e1e;border-right:1px solid #1e1e1e;box-sizing:border-box;"></div>
<div class="a t" style="left:1110px;top:193.30px;font-size:15px;line-height:15px;color:#ececec;font-weight:normal;font-style:normal;">Значения</div>
<svg class="a" style="left:1396px;top:195px;" width="16" height="9" viewBox="0 0 16 9"><path d="M0.5 8 L15.5 8 L8 0.5 Z" fill="#e6e6e6"/></svg>
<svg class="a" style="left:1273px;top:218px;" width="7" height="70" viewBox="0 0 7 70"><rect x="4" y="0" width="2" height="70" fill="#424242"/><path d="M0.5 9 L4.5 3" stroke="#686868" stroke-width="1"/><path d="M0.5 17.5 L4.5 11.5" stroke="#686868" stroke-width="1"/><path d="M0.5 26.0 L4.5 20.0" stroke="#686868" stroke-width="1"/><path d="M0.5 34.5 L4.5 28.5" stroke="#686868" stroke-width="1"/><path d="M0.5 43.0 L4.5 37.0" stroke="#686868" stroke-width="1"/><path d="M0.5 51.5 L4.5 45.5" stroke="#686868" stroke-width="1"/><path d="M0.5 60.0 L4.5 54.0" stroke="#686868" stroke-width="1"/><path d="M0.5 68.5 L4.5 62.5" stroke="#686868" stroke-width="1"/></svg>
<svg class="a" style="left:1273px;top:446px;" width="7" height="35" viewBox="0 0 7 35"><rect x="4" y="0" width="2" height="35" fill="#424242"/><path d="M0.5 9 L4.5 3" stroke="#686868" stroke-width="1"/><path d="M0.5 17.5 L4.5 11.5" stroke="#686868" stroke-width="1"/><path d="M0.5 26.0 L4.5 20.0" stroke="#686868" stroke-width="1"/><path d="M0.5 34.5 L4.5 28.5" stroke="#686868" stroke-width="1"/></svg>
<div class="a t" style="left:1137.7px;top:229.20px;font-size:15px;line-height:15px;color:#e8e8e8;font-weight:normal;font-style:normal;">Текст</div>
<div class="a" style="left:1281px;top:219px;width:138px;height:33px;background:#444444;border:1px solid #5c5c5c;box-sizing:border-box;"></div>
<div class="a t" style="left:1289.4px;top:229.25px;font-size:14px;line-height:14px;color:#f0f0f0;font-weight:bold;font-style:normal;">Параметр 1</div>
<div class="a" style="left:1100px;top:255px;width:33px;height:33px;background:#1e1e1e;border-top:1px solid #666;border-left:1px solid #666;box-sizing:border-box;"></div>
<svg class="a" style="left:1102px;top:259px;" width="28" height="28" viewBox="0 0 28 28"><g fill="none" stroke="#ecece8" stroke-width="1.2" stroke-linejoin="miter"><path d="M5.6 3.2V22.7"/><path d="M5.6 7.2H14.1V3.7L21.8 9.4L15.8 14.3H22.1V17.2H14.6V22.4L7.5 16.4L12.9 10.3H5.6"/></g></svg>
<div class="a t" style="left:1137.7px;top:264.00px;font-size:15px;line-height:15px;color:#6fa3d6;font-weight:bold;font-style:normal;">Нажата</div>
<div class="a" style="left:1282px;top:261px;width:20px;height:20px;border:1.5px solid #e8e8e8;box-sizing:border-box;"></div>
<div class="a t" style="left:1137.6px;top:456.80px;font-size:15px;line-height:15px;color:#e8e8e8;font-weight:normal;font-style:normal;">Фиксируемая</div>
<div class="a" style="left:1282px;top:454px;width:20px;height:20px;border:2px solid #e8e8e8;box-sizing:border-box;"></div>
<div class="a" style="left:1094px;top:485px;width:329px;height:1px;background:#8a8a8a;"></div>
<div class="a" style="left:1094px;top:217px;width:1px;height:264px;background:#7a7a7a;"></div>
<div class="a" style="left:1094px;top:485px;width:1px;height:3px;background:#8a8a8a;"></div>
<div class="a" style="left:1100px;top:290px;width:319px;height:34px;background:#575757;border-left:1px solid #6a6a6a;box-sizing:border-box;"></div>
<div class="a t" style="left:1116.6px;top:299.90px;font-size:15px;line-height:15px;color:#ececec;font-weight:normal;font-style:normal;">Входящие связи</div>
<svg class="a" style="left:1393px;top:303px;" width="16" height="9" viewBox="0 0 16 9"><path d="M0.5 8 L15.5 8 L8 0.5 Z" fill="#e6e6e6"/></svg>
<div class="a" style="left:1100px;top:324px;width:319px;height:1px;background:#222222;"></div>
<div class="a" style="left:1100px;top:325px;width:35px;height:34px;background:#575757;border-top:1px solid #707070;border-left:1px solid #707070;border-right:1px solid #1e1e1e;border-bottom:1px solid #1e1e1e;box-sizing:border-box;"></div>
<div class="a t" style="left:1147.4px;top:334.34px;font-size:14.6px;line-height:14.6px;color:#e8e8e8;font-weight:normal;font-style:normal;width:203px;overflow:hidden;white-space:nowrap;">Объекты.Объект 1.Параметр 1</div>
<div class="a" style="left:1352px;top:325px;width:34px;height:34px;background:#575757;border-left:1px solid #707070;border-right:1px solid #1e1e1e;border-bottom:1px solid #1e1e1e;box-sizing:border-box;"></div>
<div class="a" style="left:1386px;top:325px;width:33px;height:34px;background:#575757;border-left:1px solid #707070;border-bottom:1px solid #1e1e1e;box-sizing:border-box;"></div>
<svg class="a" style="left:1100px;top:325px;" width="35" height="34" viewBox="0 0 35 34"><g fill="none" stroke="#e6e6e6" stroke-width="1.2" stroke-linejoin="miter"><path d="M21 8.6l6.9 6.4-10.2 10.4-5.7-6.2z"/><path d="M12 19.2l-3 8.2 8.7-2"/></g><path d="M9.4 26.9l1.2-3.6 2.4 2.6z" fill="#e6e6e6"/></svg>
<svg class="a" style="left:1352px;top:325px;" width="34" height="34" viewBox="0 0 34 34"><circle cx="17.5" cy="17.5" r="8.9" fill="none" stroke="#e6e6e6" stroke-width="1.3"/><path d="M12.4 17.5L18.6 12.6V22.4z" fill="#e6e6e6"/><rect x="18" y="16.2" width="9.2" height="2.6" fill="#e6e6e6"/></svg>
<svg class="a" style="left:1386px;top:325px;" width="33" height="34" viewBox="0 0 33 34"><circle cx="17.4" cy="17.5" r="8.9" fill="none" stroke="#e6e6e6" stroke-width="1.3"/><path d="M13.1 13.2l8.6 8.6M21.7 13.2l-8.6 8.6" stroke="#e6e6e6" stroke-width="2.1"/></svg>
<div class="a" style="left:1100px;top:359px;width:319px;height:1px;background:#6e6e6e;"></div>
<div class="a" style="left:1100px;top:369px;width:319px;height:1px;background:#6e6e6e;"></div>
<div class="a" style="left:1100px;top:369px;width:319px;height:34px;background:#575757;border-left:1px solid #6a6a6a;box-sizing:border-box;"></div>
<div class="a t" style="left:1116.6px;top:378.90px;font-size:15px;line-height:15px;color:#ececec;font-weight:normal;font-style:normal;">Исходящие связи</div>
<svg class="a" style="left:1393px;top:382px;" width="16" height="9" viewBox="0 0 16 9"><path d="M0.5 8 L15.5 8 L8 0.5 Z" fill="#e6e6e6"/></svg>
<div class="a" style="left:1100px;top:403px;width:319px;height:1px;background:#222222;"></div>
<div class="a" style="left:1100px;top:404px;width:35px;height:34px;background:#575757;border-top:1px solid #707070;border-left:1px solid #707070;border-right:1px solid #1e1e1e;border-bottom:1px solid #1e1e1e;box-sizing:border-box;"></div>
<div class="a t" style="left:1147.4px;top:413.34px;font-size:14.6px;line-height:14.6px;color:#e8e8e8;font-weight:normal;font-style:normal;width:203px;overflow:hidden;white-space:nowrap;">Объекты.Объект 1.Параметр 1</div>
<div class="a" style="left:1352px;top:404px;width:34px;height:34px;background:#575757;border-left:1px solid #707070;border-right:1px solid #1e1e1e;border-bottom:1px solid #1e1e1e;box-sizing:border-box;"></div>
<div class="a" style="left:1386px;top:404px;width:33px;height:34px;background:#575757;border-left:1px solid #707070;border-bottom:1px solid #1e1e1e;box-sizing:border-box;"></div>
<svg class="a" style="left:1100px;top:404px;" width="35" height="34" viewBox="0 0 35 34"><g fill="none" stroke="#e6e6e6" stroke-width="1.2" stroke-linejoin="miter"><path d="M21 8.6l6.9 6.4-10.2 10.4-5.7-6.2z"/><path d="M12 19.2l-3 8.2 8.7-2"/></g><path d="M9.4 26.9l1.2-3.6 2.4 2.6z" fill="#e6e6e6"/></svg>
<svg class="a" style="left:1352px;top:404px;" width="34" height="34" viewBox="0 0 34 34"><circle cx="17.5" cy="17.5" r="8.9" fill="none" stroke="#e6e6e6" stroke-width="1.3"/><path d="M22.6 17.5L16.4 12.6V22.4z" fill="#e6e6e6"/><rect x="7.8" y="16.2" width="9.2" height="2.6" fill="#e6e6e6"/></svg>
<svg class="a" style="left:1386px;top:404px;" width="33" height="34" viewBox="0 0 33 34"><circle cx="17.4" cy="17.5" r="8.9" fill="none" stroke="#e6e6e6" stroke-width="1.3"/><path d="M13.1 13.2l8.6 8.6M21.7 13.2l-8.6 8.6" stroke="#e6e6e6" stroke-width="2.1"/></svg>
<div class="a" style="left:1097px;top:290px;width:325px;height:150px;border:3px solid #f04444;box-sizing:border-box;"></div>
<div class="a" style="left:25px;top:76px;width:28px;height:28px;background:#5aa870;"></div>
<svg class="a" style="left:25px;top:76px;" width="28" height="28" viewBox="0 0 28 28"><g fill="none" stroke="#ecece8" stroke-width="1.2"><rect x="4.6" y="6.8" width="10.4" height="7.4"/><path d="M9.8 14.2v1.6M4.2 15.9h11"/><rect x="6.8" y="16" width="10" height="4.8" fill="#5aa870"/><path d="M11.8 20.8v2M6.6 23.2h10.6"/><rect x="17.1" y="4.4" width="4" height="12.2"/><path d="M17.1 7h4M17.1 9.4h4"/><rect x="19.6" y="11.6" width="4.2" height="12" fill="#5aa870"/></g></svg>
<div class="a t" style="left:59.4px;top:82.00px;font-size:15px;line-height:15px;color:#f0f0f0;font-weight:normal;font-style:normal;">Система</div>
<svg class="a" style="left:12px;top:88px;" width="10" height="6" viewBox="0 0 10 6"><path d="M0 0.5 L10 0.5 L5 5.5 Z" fill="#9a9a9a"/></svg>
<div class="a" style="left:41px;top:106px;width:28px;height:28px;background:#5aa870;"></div>
<svg class="a" style="left:41px;top:106px;" width="28" height="28" viewBox="0 0 28 28"><g fill="none" stroke="#ecece8" stroke-width="1.2"><rect x="4.6" y="9.6" width="11.2" height="8.8"/><path d="M10.2 18.4v3.4M4.2 22.4h12"/><rect x="18.4" y="5.6" width="5.2" height="16.6"/><path d="M18.4 8.6h5.2M18.4 10.6h5.2"/></g></svg>
<div class="a t" style="left:75.4px;top:112.00px;font-size:15px;line-height:15px;color:#f0f0f0;font-weight:normal;font-style:normal;">АРМ 1</div>
<svg class="a" style="left:30px;top:115px;" width="6" height="10" viewBox="0 0 6 10"><path d="M0.5 0 L5.5 5 L0.5 10 Z" fill="#9a9a9a"/></svg>
<div class="a" style="left:131px;top:106px;width:28px;height:28px;background:#3c3c3c;"></div>
<svg class="a" style="left:131px;top:106px;" width="28" height="28" viewBox="0 0 28 28"><rect x="4.6" y="4.6" width="6.6" height="6.6" fill="none" stroke="#ecece8" stroke-width="1.5"/><path d="M11.2 7.8h8.1v5.6" fill="none" stroke="#ecece8" stroke-width="1.8"/><path d="M13.6 13h10.6l-5.3 5.8z" fill="#ecece8"/><rect x="17.6" y="21.4" width="2.5" height="2.4" fill="#ecece8"/></svg>
<div class="a" style="left:41px;top:136px;width:28px;height:28px;background:#3c3c3c;"></div>
<svg class="a" style="left:41px;top:136px;" width="28" height="28" viewBox="0 0 28 28"><g fill="none" stroke="#ecece8" stroke-width="1.3" stroke-linejoin="round"><path d="M4.4 23.4V6.9h6.4l2.4-2.6h7.8v5.4"/><path d="M4.4 23.4h16.9l2.3-12.6h-7.9l-2.9 2.3H6.2z"/></g></svg>
<div class="a t" style="left:75px;top:142.00px;font-size:15px;line-height:15px;color:#f0f0f0;font-weight:normal;font-style:normal;">Безопасность</div>
<svg class="a" style="left:30px;top:145px;" width="6" height="10" viewBox="0 0 6 10"><path d="M0.5 0 L5.5 5 L0.5 10 Z" fill="#9a9a9a"/></svg>
<div class="a" style="left:25px;top:170px;width:28px;height:28px;background:#d87766;"></div>
<svg class="a" style="left:25px;top:170px;" width="28" height="28" viewBox="0 0 28 28"><g fill="none" stroke="#ecece8" stroke-width="1.2"><path d="M19.8 8.4h3.8v15.2H8.4v-3.8"/><rect x="4.4" y="4.4" width="15.4" height="15.4"/><rect x="7.4" y="6.8" width="4" height="3.8"/><rect x="15.4" y="6.8" width="4.4" height="3.8"/><rect x="11.6" y="13.4" width="4" height="4"/><path d="M4.4 8.7h3M11.4 8.7h4M9.4 10.6v5h2.2M15.6 15.4h4.2"/></g></svg>
<div class="a t" style="left:59.4px;top:175.80px;font-size:15px;line-height:15px;color:#f0f0f0;font-weight:normal;font-style:normal;">Объекты</div>
<svg class="a" style="left:12px;top:182px;" width="10" height="6" viewBox="0 0 10 6"><path d="M0 0.5 L10 0.5 L5 5.5 Z" fill="#9a9a9a"/></svg>
<div class="a" style="left:41px;top:200px;width:28px;height:28px;background:#d87766;"></div>
<svg class="a" style="left:41px;top:200px;" width="28" height="28" viewBox="0 0 28 28"><g fill="none" stroke="#ecece8" stroke-width="1.2"><rect x="4.4" y="4.4" width="19" height="19"/><rect x="8.4" y="7.4" width="5" height="4.8"/><rect x="18.4" y="7.4" width="5" height="4.8"/><rect x="14.4" y="15.6" width="5" height="5"/><path d="M4.4 9.6h4M13.4 9.6h5M11 12.2v5.8h3.4M19.4 18h4"/></g></svg>
<div class="a t" style="left:75px;top:205.80px;font-size:15px;line-height:15px;color:#f0f0f0;font-weight:normal;font-style:normal;">Объект 1</div>
<svg class="a" style="left:27px;top:212px;" width="10" height="6" viewBox="0 0 10 6"><path d="M0 0.5 L10 0.5 L5 5.5 Z" fill="#9a9a9a"/></svg>
<div class="a" style="left:56px;top:230px;width:28px;height:28px;background:#3c3c3c;"></div>
<svg class="a" style="left:56px;top:230px;" width="28" height="28" viewBox="0 0 28 28"><g fill="none" stroke="#ecece8" stroke-width="1.3" stroke-linejoin="round"><path d="M4.4 23.4V6.9h6.4l2.4-2.6h7.8v5.4"/><path d="M4.4 23.4h16.9l2.3-12.6h-7.9l-2.9 2.3H6.2z"/></g></svg>
<div class="a t" style="left:90px;top:235.80px;font-size:15px;line-height:15px;color:#f0f0f0;font-weight:normal;font-style:normal;">Ресурсы</div>
<svg class="a" style="left:42px;top:242px;" width="10" height="6" viewBox="0 0 10 6"><path d="M0 0.5 L10 0.5 L5 5.5 Z" fill="#9a9a9a"/></svg>
<div class="a" style="left:71px;top:260px;width:28px;height:28px;background:#3c3c3c;"></div>
<svg class="a" style="left:71px;top:260px;" width="28" height="28" viewBox="0 0 28 28"><g fill="none" stroke="#ecece8" stroke-width="1.3" stroke-linejoin="round"><path d="M4.4 23.4V6.9h6.4l2.4-2.6h7.8v5.4"/><path d="M4.4 23.4h16.9l2.3-12.6h-7.9l-2.9 2.3H6.2z"/></g></svg>
<div class="a t" style="left:105px;top:265.80px;font-size:15px;line-height:15px;color:#f0f0f0;font-weight:normal;font-style:normal;">Окна</div>
<svg class="a" style="left:57px;top:272px;" width="10" height="6" viewBox="0 0 10 6"><path d="M0 0.5 L10 0.5 L5 5.5 Z" fill="#9a9a9a"/></svg>
<div class="a" style="left:86px;top:290px;width:28px;height:28px;background:#c08a58;"></div>
<svg class="a" style="left:86px;top:290px;" width="28" height="28" viewBox="0 0 28 28"><g fill="none" stroke="#ecece8" stroke-width="1.5"><rect x="4.4" y="5.4" width="19.2" height="16.4"/><path d="M13.4 5.4v16.4M4.4 14.4h19.2"/></g></svg>
<div class="a t" style="left:120px;top:295.80px;font-size:15px;line-height:15px;color:#f0f0f0;font-weight:normal;font-style:normal;">Окно 1</div>
<div class="a" style="left:180px;top:290px;width:28px;height:28px;background:#3c3c3c;"></div>
<svg class="a" style="left:180px;top:290px;" width="28" height="28" viewBox="0 0 28 28"><path d="M6 18.6l4.6-4.8h8.6" fill="none" stroke="#ecece8" stroke-width="2.4" stroke-linecap="round" stroke-linejoin="round"/><path d="M18.2 8.2l5.6 5.6-5.6 5.6z" fill="#ecece8"/></svg>
<div class="a" style="left:56px;top:321px;width:28px;height:28px;background:#c97666;"></div>
<svg class="a" style="left:56px;top:321px;" width="28" height="28" viewBox="0 0 28 28"><g fill="none" stroke="#ecece8" stroke-width="1.2" stroke-linejoin="miter"><path d="M5.6 3.2V22.7"/><path d="M5.6 7.2H14.1V3.7L21.8 9.4L15.8 14.3H22.1V17.2H14.6V22.4L7.5 16.4L12.9 10.3H5.6"/></g></svg>
<div class="a t" style="left:90.6px;top:325.80px;font-size:15px;line-height:15px;color:#f0f0f0;font-weight:normal;font-style:normal;">Параметр 1</div>
<div class="a" style="left:182px;top:321px;width:28px;height:27px;background:#3c3c3c;"></div>
<div class="a" style="left:216px;top:321px;width:28px;height:27px;background:#3c3c3c;"></div>
<svg class="a" style="left:182px;top:321px;" width="28" height="27" viewBox="0 0 28 27"><g fill="none" stroke="#ecece8" stroke-width="1.2"><path d="M4.6 3.2v19.4M4.6 13.7h5.6"/><path d="M10.4 9.4v8.6l5.4-4.3z"/><rect x="16.6" y="7.8" width="6.8" height="12.5"/><path d="M16.6 12h6.8M16.6 16.2h6.8"/></g></svg>
<svg class="a" style="left:216px;top:321px;" width="28" height="27" viewBox="0 0 28 27"><g fill="none" stroke="#ecece8" stroke-width="1.2"><path d="M23.5 3.2v19.4M11 13.7h5.8"/><path d="M16.9 9.4v8.6l5.4-4.3z"/><rect x="4" y="7.8" width="7" height="12.5"/><path d="M4 12h7M4 16.2h7"/></g></svg>
<div class="a" style="left:53px;top:318px;width:194px;height:33px;border:3px solid #f04444;box-sizing:border-box;"></div>
<div class="a" style="left:25px;top:354px;width:28px;height:28px;background:#7c7c5a;"></div>
<svg class="a" style="left:25px;top:354px;" width="28" height="28" viewBox="0 0 28 28"><g fill="none" stroke="#ecece8" stroke-width="1.2"><rect x="4.6" y="4.4" width="5.6" height="11.8"/><rect x="13.4" y="4.4" width="5.6" height="11.8"/><rect x="19.4" y="9.4" width="4.6" height="11.4" fill="#7c7c5a"/><path d="M4.2 18.6h15.2M9.6 18.6v2.2h5.8v-2.2M9.4 23.6h14.6"/></g><rect x="6.8" y="6.4" width="1.2" height="1.2" fill="#ecece8"/><rect x="15.6" y="6.4" width="1.2" height="1.2" fill="#ecece8"/><rect x="21.2" y="11.4" width="1.2" height="1.2" fill="#ecece8"/></svg>
<div class="a t" style="left:59.3px;top:360.30px;font-size:15px;line-height:15px;color:#f0f0f0;font-weight:normal;font-style:normal;">Библиотеки</div>
<svg class="a" style="left:15px;top:364px;" width="6" height="10" viewBox="0 0 6 10"><path d="M0.5 0 L5.5 5 L0.5 10 Z" fill="#a0a0a0"/></svg>
</body></html>
